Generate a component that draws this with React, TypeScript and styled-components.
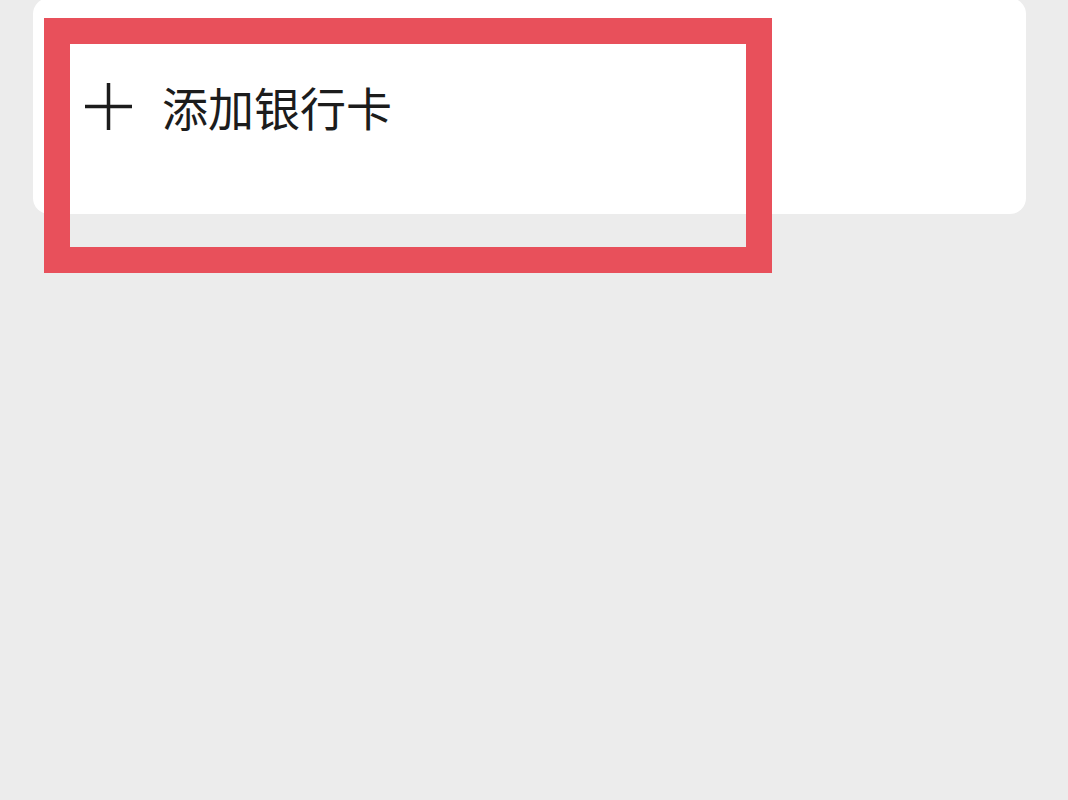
import React from "react";
import styled, { createGlobalStyle } from "styled-components";

const GlobalStyle = createGlobalStyle`
  html, body {
    margin: 0;
    padding: 0;
    background: #ececec;
  }
  body {
    font-family: "Noto Sans CJK SC", "Noto Sans", sans-serif;
  }
`;

const Page = styled.div`
  position: relative;
  width: 1068px;
  height: 800px;
  overflow: hidden;
  background: #ececec;
`;

const Card = styled.div`
  margin: -2px 0 0 33px;
  width: 993px;
  height: 216px;
  background: #ffffff;
  border-radius: 16px;
  box-sizing: border-box;
  padding: 85px 0 0 52px;
`;

const AddRow = styled.div`
  display: flex;
  align-items: center;
  gap: 30px;
  height: 46px;
`;

const PlusIcon = styled.svg`
  width: 47px;
  height: 47px;
  flex-shrink: 0;
`;

const Label = styled.span`
  font-size: 46px;
  line-height: 46px;
  color: #1c1c1c;
  letter-spacing: 0;
`;

/* red annotation frame drawn over the screenshot */
const Highlight = styled.div`
  position: absolute;
  left: 44px;
  top: 18px;
  width: 728px;
  height: 255px;
  box-sizing: border-box;
  border: 26px solid #e8505b;
  pointer-events: none;
`;

export default function App() {
  return (
    <Page>
      <GlobalStyle />
      <Card>
        <AddRow>
          <PlusIcon viewBox="0 0 47 47">
            <line x1="0" y1="23.5" x2="47" y2="23.5" stroke="#1c1c1c" strokeWidth="3.5" />
            <line x1="23.5" y1="0" x2="23.5" y2="47" stroke="#1c1c1c" strokeWidth="3.5" />
          </PlusIcon>
          <Label>添加银行卡</Label>
        </AddRow>
      </Card>
      <Highlight />
    </Page>
  );
}
